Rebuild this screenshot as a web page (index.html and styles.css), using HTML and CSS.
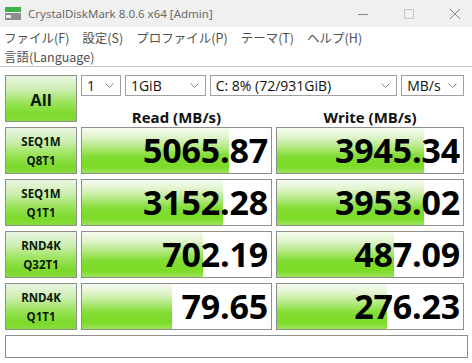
FILE: index.html
```html
<!DOCTYPE html>
<html lang="ja">
<head>
<meta charset="utf-8">
<link rel="stylesheet" href="styles.css">
</head>
<body>
<div class="titlebar">
  <svg class="appicon" width="16" height="14" viewBox="0 0 16 14">
    <rect x="0" y="0" width="16" height="5" fill="#3cb44a"/>
    <rect x="0" y="6" width="16" height="7" fill="#8a8f94"/>
    <rect x="1" y="8" width="5" height="3" fill="#e8e8e8"/>
  </svg>
  <span class="title">CrystalDiskMark 8.0.6 x64 [Admin]</span>
  <div class="winctl">
    <svg width="12" height="12" viewBox="0 0 12 12"><line x1="1" y1="6.5" x2="11" y2="6.5" stroke="#888" stroke-width="1"/></svg>
    <svg width="12" height="12" viewBox="0 0 12 12"><rect x="1.5" y="1.5" width="9" height="9" fill="none" stroke="#c8c8c8" stroke-width="1"/></svg>
    <svg width="12" height="12" viewBox="0 0 12 12"><path d="M1 1 L11 11 M11 1 L1 11" stroke="#888" stroke-width="1"/></svg>
  </div>
</div>
<div class="menubar">
  <div class="menurow">
    <span>ファイル(F)</span><span>設定(S)</span><span>プロファイル(P)</span><span>テーマ(T)</span><span>ヘルプ(H)</span>
  </div>
  <div class="menurow">
    <span>言語(Language)</span>
  </div>
</div>
<div class="main">
  <div class="grid">
    <div class="btn allbtn">All</div>
    <div class="topright">
      <div class="combos">
        <div class="combo c1"><span>1</span><svg width="9" height="6" viewBox="0 0 9 6"><polyline points="0.5,0.5 4.5,4.5 8.5,0.5" fill="none" stroke="#888"/></svg></div>
        <div class="combo c2"><span>1GiB</span><svg width="9" height="6" viewBox="0 0 9 6"><polyline points="0.5,0.5 4.5,4.5 8.5,0.5" fill="none" stroke="#888"/></svg></div>
        <div class="combo c3"><span>C: 8% (72/931GiB)</span><svg width="9" height="6" viewBox="0 0 9 6"><polyline points="0.5,0.5 4.5,4.5 8.5,0.5" fill="none" stroke="#888"/></svg></div>
        <div class="combo c4"><span>MB/s</span><svg width="9" height="6" viewBox="0 0 9 6"><polyline points="0.5,0.5 4.5,4.5 8.5,0.5" fill="none" stroke="#888"/></svg></div>
      </div>
      <div class="headers">
        <div class="hdr read-h">Read (MB/s)</div>
        <div class="hdr write-h">Write (MB/s)</div>
      </div>
    </div>

    <div class="btn label"><span>SEQ1M</span><span>Q8T1</span></div>
    <div class="cell"><div class="fill" style="width:78%"></div><div class="num">5065.87</div></div>
    <div class="cell"><div class="fill" style="width:79%"></div><div class="num">3945.34</div></div>

    <div class="btn label"><span>SEQ1M</span><span>Q1T1</span></div>
    <div class="cell"><div class="fill" style="width:74.5%"></div><div class="num">3152.28</div></div>
    <div class="cell"><div class="fill" style="width:79%"></div><div class="num">3953.02</div></div>

    <div class="btn label"><span>RND4K</span><span>Q32T1</span></div>
    <div class="cell"><div class="fill" style="width:64%"></div><div class="num">702.19</div></div>
    <div class="cell"><div class="fill" style="width:63%"></div><div class="num">487.09</div></div>

    <div class="btn label"><span>RND4K</span><span>Q1T1</span></div>
    <div class="cell"><div class="fill" style="width:47.5%"></div><div class="num">79.65</div></div>
    <div class="cell"><div class="fill" style="width:59%"></div><div class="num">276.23</div></div>
  </div>
  <div class="status"></div>
</div>
</body>
</html>
```
FILE: styles.css
```css
* { box-sizing: border-box; }
html, body { margin: 0; padding: 0; background: #ffffff; }
body {
  width: 472px;
  height: 363px;
  overflow: hidden;
  font-family: "Open Sans", "Noto Sans CJK JP", sans-serif;
}
.titlebar {
  height: 27px;
  background: #f0f0f0;
  display: flex;
  align-items: center;
  padding-left: 5px;
}
.appicon { margin-right: 7px; margin-top: 1px; }
.title {
  font-size: 11.5px;
  color: #6a6a6a;
  font-family: "Noto Sans", "Noto Sans CJK JP", sans-serif;
}
.winctl {
  margin-left: auto;
  display: flex;
  gap: 34px;
  padding-right: 11px;
}
.menubar {
  height: 40px;
  border-bottom: 1px solid #c4c4c4;
  padding-left: 4px;
  padding-top: 1px;
}
.menurow {
  height: 19px;
  display: flex;
  gap: 13px;
  align-items: center;
  font-family: "Noto Sans CJK JP", sans-serif;
  font-size: 12.5px;
  color: #505050;
}
.main { padding: 8px 0 0 5px; }
.grid {
  display: grid;
  grid-template-columns: 72px 191px 188px;
  grid-template-rows: 47px 47px 47px 47px 47px;
  column-gap: 4px;
  row-gap: 5px;
}
.btn {
  border: 1px solid #8e8e8e;
  background: linear-gradient(to bottom, #eaf6e2 0%, #cdeeb2 30%, #9de45c 58%, #7cd92c 85%, #86dc3a 100%);
  color: #0a1a0a;
  font-weight: 700;
  display: flex;
  flex-direction: column;
  align-items: center;
  justify-content: center;
}
.allbtn { font-size: 16.5px; padding-top: 2px; }
.label { font-size: 11.5px; line-height: 19px; padding-top: 1px; }
.topright {
  grid-column: 2 / 4;
  display: flex;
  flex-direction: column;
}
.combos {
  display: flex;
  gap: 4px;
  height: 23px;
}
.combo {
  border: 1px solid #a0a0a0;
  background: #ffffff;
  display: flex;
  align-items: center;
  justify-content: space-between;
  padding: 0 6px 0 5px;
  font-size: 14px;
  color: #111;
}
.combo svg { flex: none; margin-top: 1px; }
.c1 { width: 40px; }
.c2 { width: 81px; }
.c3 { width: 188px; }
.c4 { width: 63px; }
.headers {
  display: grid;
  grid-template-columns: 191px 188px;
  column-gap: 4px;
  flex: 1;
  align-items: center;
}
.hdr {
  text-align: center;
  font-weight: 700;
  font-size: 15px;
  color: #111;
  padding-top: 11px;
}
.cell {
  border: 1px solid #8e8e8e;
  background: #ffffff;
  display: grid;
  grid-template-columns: 1fr;
  grid-template-rows: 1fr;
  overflow: hidden;
}
.fill {
  grid-area: 1 / 1;
  height: 100%;
  background: linear-gradient(to bottom, #f6fbf2 0%, #e0f4cc 20%, #aee878 45%, #84dd36 62%, #7bdb26 85%, #9be55a 100%);
}
.num {
  grid-area: 1 / 1;
  text-align: right;
  font-size: 34px;
  font-weight: 700;
  line-height: 45px;
  padding-right: 3px;
  color: #000;
  letter-spacing: -0.2px;
}
.status {
  margin-top: 5px;
  width: 463px;
  height: 23px;
  border: 1px solid #8e8e8e;
  background: #fff;
}
```
